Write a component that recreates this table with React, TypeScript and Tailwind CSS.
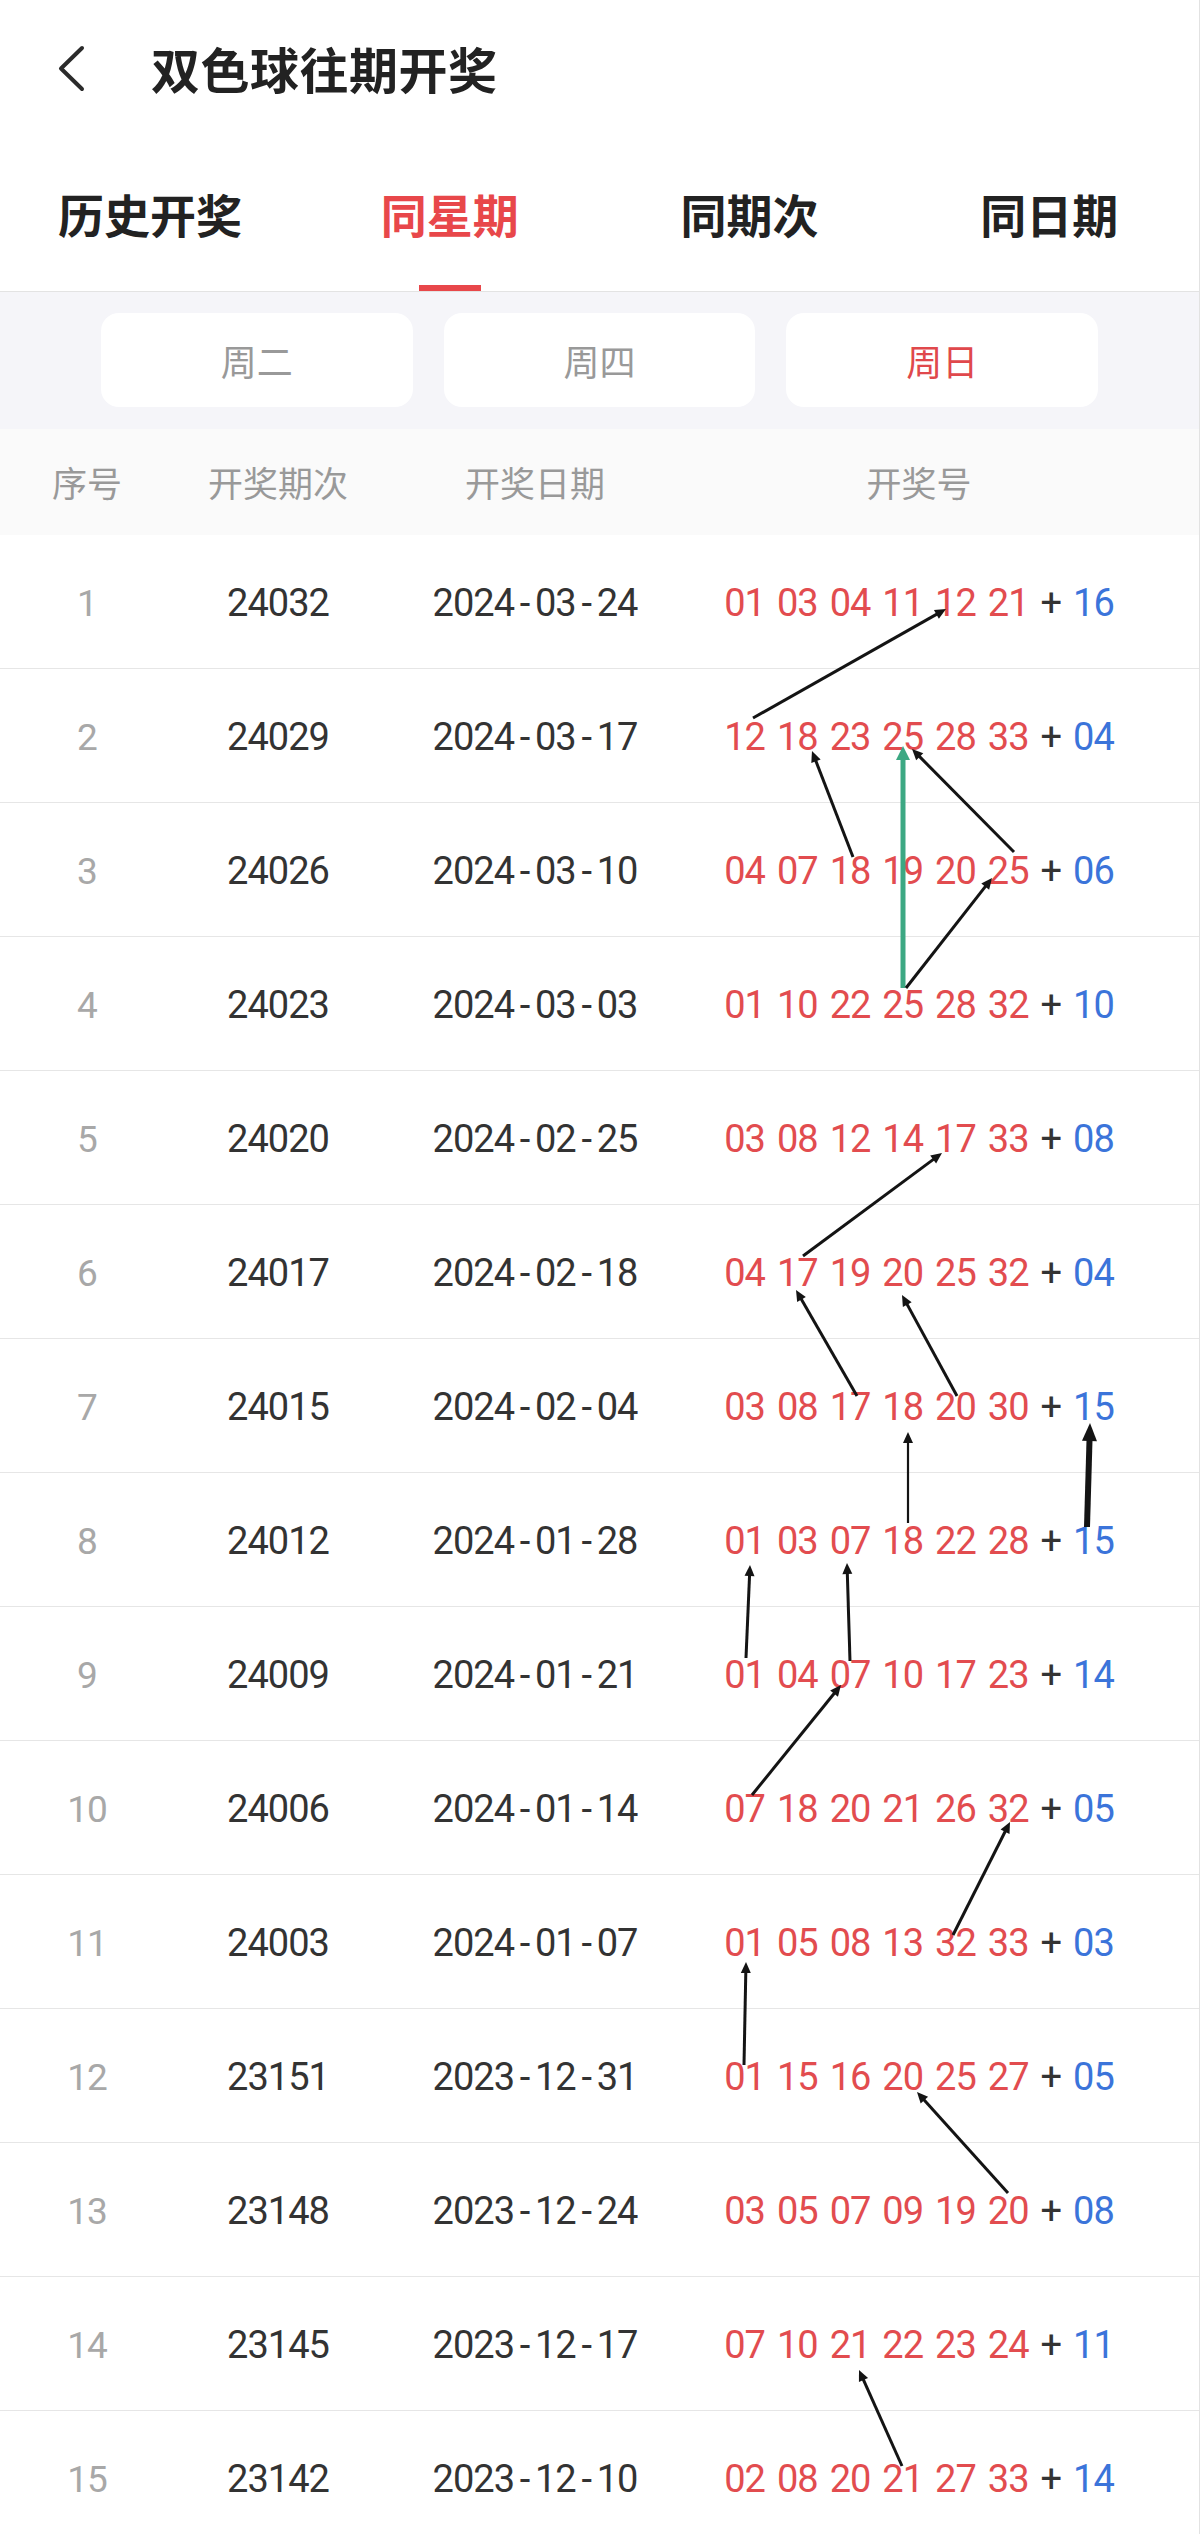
import React from 'react';

type Draw = { no: number; issue: string; date: string; red: string[]; blue: string };

const draws: Draw[] = [
  { no: 1, issue: '24032', date: '2024-03-24', red: ['01', '03', '04', '11', '12', '21'], blue: '16' },
  { no: 2, issue: '24029', date: '2024-03-17', red: ['12', '18', '23', '25', '28', '33'], blue: '04' },
  { no: 3, issue: '24026', date: '2024-03-10', red: ['04', '07', '18', '19', '20', '25'], blue: '06' },
  { no: 4, issue: '24023', date: '2024-03-03', red: ['01', '10', '22', '25', '28', '32'], blue: '10' },
  { no: 5, issue: '24020', date: '2024-02-25', red: ['03', '08', '12', '14', '17', '33'], blue: '08' },
  { no: 6, issue: '24017', date: '2024-02-18', red: ['04', '17', '19', '20', '25', '32'], blue: '04' },
  { no: 7, issue: '24015', date: '2024-02-04', red: ['03', '08', '17', '18', '20', '30'], blue: '15' },
  { no: 8, issue: '24012', date: '2024-01-28', red: ['01', '03', '07', '18', '22', '28'], blue: '15' },
  { no: 9, issue: '24009', date: '2024-01-21', red: ['01', '04', '07', '10', '17', '23'], blue: '14' },
  { no: 10, issue: '24006', date: '2024-01-14', red: ['07', '18', '20', '21', '26', '32'], blue: '05' },
  { no: 11, issue: '24003', date: '2024-01-07', red: ['01', '05', '08', '13', '32', '33'], blue: '03' },
  { no: 12, issue: '23151', date: '2023-12-31', red: ['01', '15', '16', '20', '25', '27'], blue: '05' },
  { no: 13, issue: '23148', date: '2023-12-24', red: ['03', '05', '07', '09', '19', '20'], blue: '08' },
  { no: 14, issue: '23145', date: '2023-12-17', red: ['07', '10', '21', '22', '23', '24'], blue: '11' },
  { no: 15, issue: '23142', date: '2023-12-10', red: ['02', '08', '20', '21', '27', '33'], blue: '14' },
];

// hand-drawn annotation arrows: tail -> head, page coordinates
type Mark = { x1: number; y1: number; x2: number; y2: number; kind?: 'green' | 'thick' | 'thin' };
const marks: Mark[] = [
  { x1: 753, y1: 718, x2: 946, y2: 609 },
  { x1: 853, y1: 857, x2: 812, y2: 751 },
  { x1: 903, y1: 988, x2: 903, y2: 746, kind: 'green' },
  { x1: 1014, y1: 852, x2: 912, y2: 749 },
  { x1: 906, y1: 988, x2: 992, y2: 878 },
  { x1: 803, y1: 1256, x2: 942, y2: 1153 },
  { x1: 857, y1: 1396, x2: 796, y2: 1290 },
  { x1: 957, y1: 1396, x2: 902, y2: 1295 },
  { x1: 908, y1: 1523, x2: 908, y2: 1432, kind: 'thin' },
  { x1: 1087, y1: 1527, x2: 1090, y2: 1423, kind: 'thick' },
  { x1: 746, y1: 1658, x2: 750, y2: 1565 },
  { x1: 850, y1: 1661, x2: 847, y2: 1563 },
  { x1: 752, y1: 1795, x2: 841, y2: 1685 },
  { x1: 953, y1: 1935, x2: 1010, y2: 1822 },
  { x1: 744, y1: 2065, x2: 746, y2: 1962 },
  { x1: 1008, y1: 2193, x2: 917, y2: 2092 },
  { x1: 902, y1: 2466, x2: 859, y2: 2370 },
];

function Arrow({ x1, y1, x2, y2, kind }: Mark) {
  const color = kind === 'green' ? '#3ca883' : '#141414';
  const sw = kind === 'green' ? 5 : kind === 'thick' ? 6 : kind === 'thin' ? 2.2 : 3;
  const hl = kind === 'green' ? 14 : kind === 'thick' ? 18 : 11;
  const hw = kind === 'green' ? 14 : kind === 'thick' ? 15 : 10;
  const dx = x2 - x1;
  const dy = y2 - y1;
  const len = Math.hypot(dx, dy);
  const ux = dx / len;
  const uy = dy / len;
  const bx = x2 - ux * hl;
  const by = y2 - uy * hl;
  const px = -uy * (hw / 2);
  const py = ux * (hw / 2);
  return (
    <g>
      <line x1={x1} y1={y1} x2={bx + ux * 2} y2={by + uy * 2} stroke={color} strokeWidth={sw} />
      <polygon points={`${x2},${y2} ${bx + px},${by + py} ${bx - px},${by - py}`} fill={color} />
    </g>
  );
}

function DateText({ date }: { date: string }) {
  const parts = date.split('-');
  return (
    <span className="flex items-center">
      {parts.map((p, i) => (
        <React.Fragment key={i}>
          {i > 0 && <span className="inline-block w-[21px] text-center">-</span>}
          <span>{p}</span>
        </React.Fragment>
      ))}
    </span>
  );
}

const tabs = ['历史开奖', '同星期', '同期次', '同日期'];
const days = ['周二', '周四', '周日'];

export default function App() {
  return (
    <div className="relative w-[1200px] border-r border-[#e2e2e2] bg-white font-['Roboto','Noto_Sans_CJK_SC',sans-serif]">
      <header className="flex h-[136px] items-center pl-[56px]">
        <svg width="32" height="48" viewBox="0 0 32 48" className="shrink-0">
          <path d="M26 4 L5 24.5 L26 45" fill="none" stroke="#2b2b2b" strokeWidth="4" strokeLinecap="round" strokeLinejoin="round" />
        </svg>
        <h1 className="ml-[63px] font-['Noto_Sans_CJK_SC',sans-serif] text-[49px] font-bold tracking-[0.5px] text-[#222]">
          双色球往期开奖
        </h1>
      </header>

      <nav className="grid h-[156px] grid-cols-4 border-b border-[#e3e3e3]">
        {tabs.map((t) => {
          const active = t === '同星期';
          return (
            <div key={t} className="relative flex items-center justify-center">
              <span
                className={`font-['Noto_Sans_CJK_SC',sans-serif] text-[46px] font-bold ${active ? 'text-[#e8474a]' : 'text-[#222]'}`}
              >
                {t}
              </span>
              {active && <span className="absolute bottom-0 left-1/2 h-[6px] w-[62px] -translate-x-1/2 bg-[#e8474a]" />}
            </div>
          );
        })}
      </nav>

      <div className="grid grid-cols-3 gap-[31px] bg-[#f5f5f9] px-[101px] pt-[21px] pb-[22px]">
        {days.map((d) => (
          <div
            key={d}
            className={`flex h-[94px] items-center justify-center rounded-[18px] bg-white font-['Noto_Sans_CJK_SC',sans-serif] text-[36px] ${d === '周日' ? 'text-[#e0484c]' : 'text-[#999]'}`}
          >
            {d}
          </div>
        ))}
      </div>

      <div className="grid h-[106px] grid-cols-[174px_208px_306px_462px] items-center bg-[#fafafa] font-['Noto_Sans_CJK_SC',sans-serif] text-[35px] text-[#999]">
        <span className="text-center">序号</span>
        <span className="text-center">开奖期次</span>
        <span className="text-center">开奖日期</span>
        <span className="text-center">开奖号</span>
      </div>

      <div>
        {draws.map((r) => (
          <div
            key={r.no}
            className="grid h-[134px] grid-cols-[174px_208px_306px_462px] items-center border-b border-[#e6e6e6] pt-[4px] text-[38px] tracking-[-1px] text-[#333]"
          >
            <span className="text-center text-[37px] text-[#a8a8a8]">{r.no}</span>
            <span className="text-center">{r.issue}</span>
            <span className="flex justify-center">
              <DateText date={r.date} />
            </span>
            <span className="flex justify-center gap-[12px]">
              {r.red.map((n, i) => (
                <span key={i} className="text-[#e24c4f]">
                  {n}
                </span>
              ))}
              <span className="text-[#333]">+</span>
              <span className="text-[#3b74da]">{r.blue}</span>
            </span>
          </div>
        ))}
      </div>

      <svg className="pointer-events-none absolute top-0 left-0" width="1200" height="2545" viewBox="0 0 1200 2545">
        {marks.map((m, i) => (
          <Arrow key={i} {...m} />
        ))}
      </svg>
    </div>
  );
}
